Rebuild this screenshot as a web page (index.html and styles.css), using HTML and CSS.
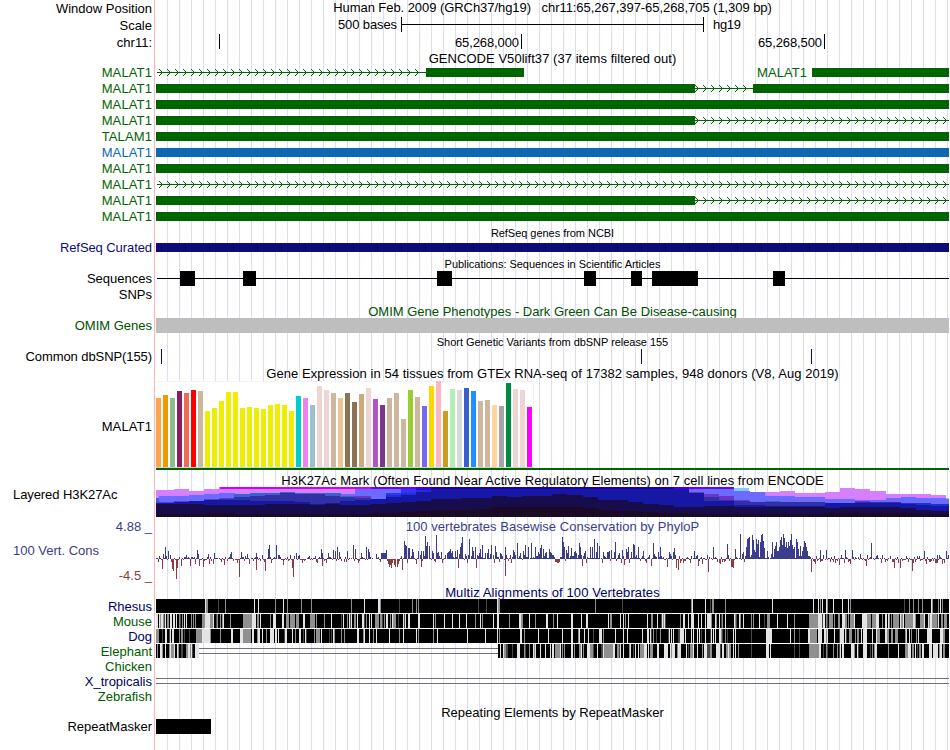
FILE: index.html
```html
<!DOCTYPE html>
<html lang="en">
<head>
    <meta charset="UTF-8">
    <title>Human chr11:65,267,397-65,268,705 - Genome Browser</title>
    <link rel="stylesheet" href="styles.css">
</head>
<body>
    <div class="browser">
        <div class="track ruler">
            <div class="label l-first">Window Position</div>
            <div class="title t-window">Human Feb. 2009 (GRCh37/hg19) &nbsp; chr11:65,267,397-65,268,705 (1,309 bp)</div>
        </div>
        <div class="track ruler lower">
            <div class="label">Scale</div>
            <svg class="data" width="794" height="17">
                <text x="241" y="12" text-anchor="end" textLength="59">500 bases</text>
                <path class="tick" d="M245.5 0v15M547.5 0v15M245 7.5h302"/>
                <text x="557" y="12" textLength="28">hg19</text>
            </svg>
        </div>
        <div class="track ruler lower">
            <div class="label">chr11:</div>
            <svg class="data" width="794" height="17">
                <path class="tick" d="M63.5 0v15M365.5 0v15M668.5 0v15"/>
                <text x="363" y="13" text-anchor="end" textLength="64">65,268,000</text>
                <text x="666" y="13" text-anchor="end" textLength="64">65,268,500</text>
            </svg>
        </div>

        <div class="track head short"><div class="title t-gencode">GENCODE V50lift37 (37 items filtered out)</div></div>
        <div id="genes"></div>

        <div class="track head lower"><div class="title small">RefSeq genes from NCBI</div></div>
        <div class="track refseq">
            <div class="label tight">RefSeq Curated</div>
            <svg class="data" width="793" height="16"><rect y="3" width="793" height="9"/></svg>
        </div>

        <div class="track head lower"><div class="title small">Publications: Sequences in Scientific Articles</div></div>
        <div class="track">
            <div class="label">Sequences</div>
            <svg class="data" width="793" height="16">
                <path d="M1 7h792v1H1zM24 0h15v15H24zM87 0h13v15H87zM281 0h15v15H281zM428 0h12v15H428zM475 0h11v15H475zM496 0h46v15H496zM617 0h12v15H617z"/>
            </svg>
        </div>
        <div class="track"><div class="label">SNPs</div></div>

        <div class="track head omim lower"><div class="title t-omim">OMIM Gene Phenotypes - Dark Green Can Be Disease-causing</div></div>
        <div class="track omim">
            <div class="label">OMIM Genes</div>
            <svg class="data" width="793" height="16"><rect width="793" height="15"/></svg>
        </div>

        <div class="track head lower"><div class="title small">Short Genetic Variants from dbSNP release 155</div></div>
        <div class="track">
            <div class="label tight">Common dbSNP(155)</div>
            <svg class="data" width="793" height="16">
                <path class="snp" d="M5.5 0v15M485.5 0v15M655.5 0v15"/>
            </svg>
        </div>

        <div class="track head tall lower"><div class="title t-gtex">Gene Expression in 54 tissues from GTEx RNA-seq of 17382 samples, 948 donors (V8, Aug 2019)</div></div>
        <div class="track gtex">
            <div class="label wide">MALAT1</div>
            <svg class="data" id="gtex" width="793" height="89"></svg>
        </div>

        <div class="track head tall2"><div class="title t-h3k">H3K27Ac Mark (Often Found Near Active Regulatory Elements) on 7 cell lines from ENCODE</div></div>
        <div class="track h3k">
            <div class="label left tight">Layered H3K27Ac</div>
            <svg class="data" id="h3k" width="793" height="30"></svg>
        </div>

        <div class="track head cons">
            <div class="label">4.88 _</div>
            <div class="title t-phylop">100 vertebrates Basewise Conservation by PhyloP</div>
        </div>
        <div class="track phylop cons">
            <div class="label limits">
                <span class="name">100 Vert. Cons</span>
                <span class="min">-4.5 _</span>
            </div>
            <svg class="data" id="phylop" width="793" height="51"></svg>
        </div>

        <div class="track head short multiz"><div class="title t-multiz">Multiz Alignments of 100 Vertebrates</div></div>
        <div id="multiz"></div>

        <div class="track head lower"><div class="title t-repeat">Repeating Elements by RepeatMasker</div></div>
        <div class="track">
            <div class="label">RepeatMasker</div>
            <svg class="data" width="793" height="16"><rect width="55" height="15"/></svg>
        </div>
    </div>
    <script src="tracks.js"></script>
</body>
</html>
```
FILE: styles.css
```css
body {
    margin: 0;
    background: #fff;
    font-family: "Liberation Sans", Arial, Helvetica, sans-serif;
    font-size: 13px;
    line-height: 15px;
    color: #000;
}
.browser {
    width: 950px;
    height: 750px;
    overflow: hidden;
    /* red edge of the label column, then one guide line every 12px */
    background:
        linear-gradient(#ffb4b4, #ffb4b4) 154px 0 / 1px 100% no-repeat,
        repeating-linear-gradient(to right, #dcdcf8 0, #dcdcf8 1px, transparent 1px, transparent 12px) 167px 0 / 783px 100% no-repeat;
}
.track {
    display: grid;
    grid-template-columns: 152px 794px;
    column-gap: 4px;
    height: 16px;
}
.ruler {
    height: 17px;
}
.head {
    height: 15px;
}
.short {
    height: 14px;
}
.tall {
    height: 16px;
}
.lower > .title, .ruler.lower > .label, .l-first {
    padding-top: 1px;
}
.label {
    text-align: right;
    white-space: nowrap;
}
.label.left {
    text-align: left;
    padding-left: 13px;
}
.tight {
    letter-spacing: -0.08px;
}
.wide {
    letter-spacing: 0.12px;
}
.title {
    grid-column: 2;
    width: 793px;
    text-align: center;
    white-space: nowrap;
}
.small {
    font-size: 11px;
    letter-spacing: -0.04px;
}
.t-window {
    letter-spacing: -0.06px;
}
.t-gencode {
    letter-spacing: 0.05px;
}
.t-gtex, .t-h3k {
    letter-spacing: 0.057px;
}
.t-phylop {
    letter-spacing: 0.03px;
}
.t-multiz {
    letter-spacing: 0.1px;
}
.data {
    display: block;
    grid-column: 2;
    overflow: hidden;
    shape-rendering: crispEdges;
}
.tick {
    stroke: #000;
    fill: none;
}
.snp {
    stroke: #0000c8;
}

/* genes */
.gene {
    color: #006400;
    fill: #006400;
}
.gene.canonical {
    color: #0c68b0;
    fill: #0c68b0;
}
.refseq {
    color: #0c0c78;
    fill: #0c0c78;
}
.omim {
    color: #005000;
    fill: #bebebe;
}

/* expression */
.gtex {
    height: 89px;
}
.gtex .label {
    padding-top: 38px;
}
.tall2 {
    height: 17px;
}
.tall2 .title {
    padding-top: 3px;
}
.h3k {
    height: 32px;
}

/* conservation */
.cons {
    color: #3c3c8c;
}
.phylop {
    height: 51px;
}
.limits {
    display: flex;
    flex-direction: column;
    justify-content: space-between;
    height: 40px;
    padding-top: 9px;
}
.limits .name {
    text-align: left;
    padding-left: 13px;
}
.limits .min {
    color: #8c3c3c;
}
.multiz {
    color: #000064;
}
.species {
    height: 15px;
    color: #000064;
}
.species.alt {
    color: #005a00;
}
```
FILE: tracks.js
```js
const LEFT = 156;

function rect(x, y, w, h, fill) {
    return `<rect x="${x}" y="${y}" width="${w}" height="${h}"${fill ? ` fill="${fill}"` : ''}/>`;
}

// small repeatable generator for the fine grained signal
function rng(seed) {
    return () => {
        seed = (seed * 1664525 + 1013904223) >>> 0;
        return seed / 4294967296;
    };
}

// ---- genes: exons and introns as [start, end] ----
const genes = [
    { exons: [[426, 524], [812, 949]], introns: [[157, 426]], inner: 'MALAT1' },
    { exons: [[156, 695], [753, 949]], introns: [[695, 753]] },
    { exons: [[156, 949]] },
    { exons: [[156, 695]], introns: [[695, 949]] },
    { name: 'TALAM1', exons: [[156, 949]] },
    { exons: [[156, 949]], canonical: true },
    { exons: [[156, 949]] },
    { exons: [], introns: [[157, 949]] },
    { exons: [[156, 695]], introns: [[695, 949]] },
    { exons: [[156, 949]] }
];

document.getElementById('genes').innerHTML = genes.map(g => {
    let s = '';
    (g.introns || []).forEach(([a, b]) => {
        let d = `M${a - LEFT} 7h${b - a}v1h${a - b}z`;
        for (let tip = 162; tip < b; tip += 8) {
            if (tip - 3 < a) continue;
            for (let k = 1; k <= 3; k++) {
                const x = tip - LEFT - k;
                d += `M${x} ${7 - k}h1v1h-1zM${x} ${7 + k}h1v1h-1z`;
            }
        }
        s += `<path d="${d}"/>`;
    });
    g.exons.forEach(([a, b]) => { s += rect(a - LEFT, 3, b - a, 9); });
    if (g.inner) s += `<text x="651" y="12" text-anchor="end" textLength="50">${g.inner}</text>`;
    return `<div class="track gene${g.canonical ? ' canonical' : ''}"><div class="label wide">${g.name || 'MALAT1'}</div><svg class="data" width="793" height="16">${s}</svg></div>`;
}).join('');

// ---- GTEx ----
const tissues = [
    [69, '#ffa54f'], [72, '#ee9a00'], [69, '#8fbc8f'], [76, '#8b1c62'], [74, '#ee6a50'], [77, '#ff0000'], [76, '#cdb79e'],
    [56, '#eeee00'], [59, '#eeee00'], [66, '#eeee00'], [75, '#eeee00'], [75, '#eeee00'], [59, '#eeee00'], [60, '#eeee00'],
    [59, '#eeee00'], [58, '#eeee00'], [62, '#eeee00'], [63, '#eeee00'], [62, '#eeee00'], [56, '#eeee00'],
    [71, '#00cdcd'], [69, '#ee82ee'], [62, '#9ac0cd'], [81, '#eed5d2'], [77, '#eed5d2'], [74, '#cdb79e'], [69, '#eec591'],
    [74, '#8b7355'], [65, '#8b7355'], [73, '#cdaa7d'], [79, '#eed5d2'], [68, '#b452cd'], [62, '#7a378b'], [69, '#cdb79e'],
    [74, '#cdb79e'], [48, '#cdb79e'], [77, '#9acd32'], [70, '#cdb79e'], [61, '#7a67ee'], [81, '#ffd700'], [86, '#ffb6c1'],
    [56, '#cd9b1d'], [78, '#b4eeb4'], [77, '#d9d9d9'], [79, '#3a5fcd'], [76, '#1e90ff'], [66, '#cdb79e'], [67, '#cdb79e'],
    [62, '#ffd39b'], [61, '#a6a6a6'], [84, '#008b45'], [78, '#eed5d2'], [77, '#eed5d2'], [60, '#ff00ff']
];
document.getElementById('gtex').innerHTML =
    rect(0, 0, 378, 87, '#f3f3f3') + rect(0, 1, 377, 85, '#fff') + rect(0, 86, 378, 1, '#d0d0d0') +
    tissues.map(([h, c], i) => rect(i * 7, 86 - h, 5, h, c)).join('') +
    rect(0, 87, 793, 2, '#006400');

// ---- H3K27Ac: every layer is a list of [x, top], held until the next x; null = nothing ----
const layers = [
    ['#d67fff', [[156, 490], [174, 489], [189, 491], [204, 489], [219, 487], [355, null], [765, 492], [780, 491], [795, 493], [825, 492], [840, 488], [855, 489], [870, 491], [886, 494], [931, 495], [946, null]]],
    ['#80ccff', [[734, 488], [749, null], [946, 498]]],
    ['#6b6bff', [[159, 496], [189, 495], [204, 494], [219, 493], [235, null], [341, 494], [355, 489], [401, null], [689, 489], [734, 491], [750, 492], [765, 496], [795, 497], [825, 499], [855, 500], [886, 498], [901, 497], [916, 498], [946, 499]]],
    ['#3333ff', [[386, 493], [401, 489], [416, 488], [431, null]]],
    ['#d400ff', [[220, 487], [371, null]], 489],
    ['#6a00ff', [[371, 487], [416, null], [689, 487], [734, null]], 489],
    ['#3366cc', [[156, 498], [159, null], [234, 494], [250, 493], [280, 492], [295, 493], [341, 496], [355, null], [765, 501], [780, null]]],
    ['#6a35c8', [[156, 502], [174, 501], [204, 499], [219, 498], [234, null], [355, 496], [371, null], [689, 492], [704, 494], [719, 496], [734, 500], [749, null], [855, 501], [870, null]]],
    ['#3230a5', [[219, 499], [234, 497], [250, 496], [265, 495], [280, 493], [295, 494], [325, 496], [340, 497], [355, 498], [371, null], [704, 497], [719, 500], [734, 501], [750, 502], [825, 503], [855, 502], [901, null]]],
    ['#1a33cc', [[386, 495], [401, 493], [416, 490], [431, null], [901, 503], [931, 504]]],
    ['#1717a5', [[156, 503], [174, 502], [189, 501], [204, 500], [250, 501], [295, 502], [310, 504], [325, 503], [340, 501], [355, 500], [371, 499], [386, 497], [401, 495], [416, 492], [431, 487], [674, 490], [689, 493], [704, 501], [734, 505], [765, 506], [825, 503], [886, 503], [901, 504], [916, 505], [931, 506]]],
    ['#1b00a8', [[431, 487], [674, null]], 489],
    ['#3a00e0', [[416, 487], [431, null], [674, 487], [689, null]], 490],
    ['#170d4d', [[156, 504], [204, 505], [265, 504], [310, 505], [325, 504], [340, 505], [371, 504], [386, 503], [401, 502], [416, 501], [431, 499], [461, 498], [492, 496], [507, 497], [522, 496], [552, 494], [567, 495], [583, 497], [598, 500], [628, 502], [643, 504], [659, 505], [674, 507], [704, 506], [734, 507], [825, 508], [840, 507], [900, 508], [916, 510], [931, 511]]],
    ['#1a0a26', [[156, 514], [204, 513], [235, 514], [371, 513], [401, 512], [416, 511], [431, 510], [477, 509], [492, 507], [583, 508], [598, 510], [614, 511], [643, 512], [659, 513], [689, 514], [825, 513], [916, 514]]]
];
document.getElementById('h3k').innerHTML = layers.map(([color, steps, bottom = 517]) =>
    steps.map(([x, top], i) => {
        const end = i + 1 < steps.length ? steps[i + 1][0] : 949;
        return top === null ? '' : rect(x - LEFT, top - 487, end - x, bottom - top, color);
    }).join('')).join('');

// ---- PhyloP: peaks as x:height ----
const up = '163:5 165:12 168:8 197:9 198:5 208:5 214:6 230:5 231:7 241:7 247:5 256:6 262:4 268:10 269:14 276:14 278:4 296:6 309:3 321:10 322:6 328:6 333:9 335:8 337:12 339:7 347:8 353:14 355:10 361:6 366:12 368:10 369:7 376:5 381:6 382:6 383:6 384:6 385:6 386:9 ' +
    '404:18 405:14 406:13 408:11 409:11 412:10 421:8 425:23 426:13 427:17 429:13 436:24 450:10 452:8 455:8 457:9 460:12 461:16 462:22 469:20 472:12 475:12 480:10 482:14 488:10 491:14 495:13 505:12 513:9 517:16 523:8 525:14 528:12 531:16 535:12 540:11 541:14 543:10 549:10 ' +
    '562:22 563:17 564:12 566:9 568:13 571:11 579:16 580:12 585:8 590:12 592:12 594:20 597:16 599:13 611:9 615:17 622:9 626:10 628:12 633:15 634:14 638:12 643:8 653:16 660:12 669:7 674:11 694:8 713:12 727:15 735:10 740:25 742:5 746:12 747:20 748:21 749:22 752:24 753:19 754:9 756:20 757:15 758:19 760:17 761:24 762:25 763:18 764:11 772:17 774:10 775:13 776:17 777:8 779:12 780:19 781:22 782:14 783:25 784:21 785:12 786:17 787:11 788:17 789:13 790:19 791:25 792:14 793:10 794:12 796:20 797:17 798:10 800:13 802:8 803:12 804:18 805:16 806:12 807:8 820:9 826:9 845:9 852:9 860:5 871:16 890:3 924:8 937:4 946:8';
const down = '162:10 172:10 173:12 176:20 177:9 181:7 190:7 195:5 199:7 203:8 209:5 213:5 224:6 239:18 249:5 256:11 265:12 283:6 292:9 293:18 322:7 358:4 388:5 389:8 390:6 391:9 392:4 394:6 395:8 397:8 398:5 402:11 416:5 421:8 458:9 467:4 476:9 505:17 511:4 555:3 556:3 557:4 558:4 559:3 582:7 586:4 602:4 624:6 651:7 667:8 676:9 678:11 683:4 698:7 702:5 708:13 717:3 719:4 720:5 722:3 731:8 732:8 733:9 811:13 815:5 820:3 830:3 839:6 850:5 866:7 894:9 900:9 912:12 926:5 937:4 942:5';
const peaks = str => new Map(str.split(' ').map(p => p.split(':').map(Number)));
const upPeaks = peaks(up), downPeaks = peaks(down);
const rand = rng(11);
let bars = '';
for (let x = LEFT; x < 949; x++) {
    const busy = (x > 400 && x < 675) || (x > 735 && x < 808);
    const r = rand(), n = rand();
    let u = upPeaks.get(x) || 0, d = downPeaks.get(x) || 0;
    if (!u && !d) {
        if (r < (busy ? 0.82 : 0.5)) u = 1 + Math.floor(n * n * (busy ? 8 : 4));
        else if (r > (busy ? 0.9 : 0.6)) d = 1 + Math.floor(n * n * 4);
    }
    if (u) bars += rect(x - LEFT, 25 - u, 1, u, '#3c3c8c');
    if (d) bars += rect(x - LEFT, 25, 1, d, '#8c3c3c');
}
document.getElementById('phylop').innerHTML = bars;

// ---- multiz: wide blocks x:width:shade, plus [from, to, density] of thin stripes ----
const shades = { w: '#e4e4e4', g: '#909090', d: '#484848', k: '#000' };
const species = [
    { name: 'Rhesus', from: 156,
      blocks: '205:1:w 206:2:g 218:1:d 225:1:g 254:1:w 258:1:w 275:1:g 283:1:w 287:1:g 301:1:g 311:1:g 351:1:g 364:1:w 378:2:w 380:1:g 399:1:d 412:1:g 416:1:g 418:1:g 478:1:d 486:1:d 497:1:w 498:2:g 595:1:g 622:1:d 691:1:g 692:1:w 705:1:w 710:1:d 712:2:g 725:1:g 772:1:w 813:1:w 818:1:w 820:1:g 822:1:w 826:1:w 827:1:g 833:1:w 842:1:w 848:1:w 850:1:g 904:1:d 909:1:g 913:1:g 918:1:g 922:1:g 931:1:w 932:1:g 938:1:g 940:1:w 942:1:g', zones: [] },
    { name: 'Mouse', alt: true, from: 156,
      blocks: '161:2:w 202:3:g 205:5:w 210:3:g 243:9:g 252:4:w 257:2:g 273:3:w 282:2:w 286:3:g 290:5:g 296:3:g 303:2:w 310:4:g 349:1:w 354:2:g 362:2:w 375:4:g 386:2:w 393:3:g 408:1:w 419:1:w 433:1:w 435:1:g 444:1:w 452:1:w 459:1:w 466:1:w 475:1:g 480:1:w 482:1:g 493:1:w 497:2:w 509:1:g 519:2:w 521:2:g 529:1:w 535:1:g 546:2:w 553:1:g 557:1:w 571:2:w 581:1:w 586:2:w 608:1:w 610:2:g 625:1:g 628:1:w 647:1:w 652:1:g 657:1:w 663:1:g 680:1:g 683:1:w 691:3:w 698:1:w 705:1:w 708:3:w 719:1:w 722:1:g 725:1:w 743:1:w 764:1:d 767:3:g 777:1:w 787:1:w 794:1:g 809:9:g 818:4:w 823:2:w 829:4:g 842:3:w 845:2:g 850:3:g 862:5:w 867:4:g 872:4:g 876:3:w 885:2:w 895:4:g 901:2:g 905:8:g 913:2:w 920:4:g 924:1:w 930:2:w 932:5:g 938:1:w 941:2:g 944:3:g',
      zones: [[156, 200, .55], [212, 242, .6], [258, 300, .3], [300, 345, .28], [346, 420, .42], [612, 626, .2], [648, 670, .3], [680, 730, .4], [730, 765, .15], [818, 862, .35], [880, 949, .4]] },
    { name: 'Dog', from: 156,
      blocks: '157:2:g 165:2:w 172:2:w 196:6:g 203:5:w 209:1:w 220:1:g 231:2:w 240:3:w 243:8:g 252:2:w 258:2:w 270:3:w 275:2:w 285:2:w 292:1:w 299:2:w 316:4:g 321:1:w 334:1:g 344:1:g 357:2:w 363:1:g 373:1:g 376:1:w 389:1:w 399:1:g 403:1:w 416:1:w 418:1:g 433:1:g 437:1:w 467:1:w 485:1:w 497:1:w 499:1:g 520:2:w 524:1:g 538:1:w 548:1:w 562:1:w 571:2:w 579:1:w 584:1:w 588:1:w 600:2:w 615:1:w 627:1:w 642:1:w 647:2:w 653:1:g 669:1:w 673:1:w 680:2:w 683:1:w 691:1:w 699:1:w 705:1:w 719:2:w 725:1:g 735:1:w 751:1:d 766:6:w 790:1:w 794:1:g 799:1:d 808:2:w 810:7:g 818:3:w 824:1:w 841:3:w 849:3:g 857:2:g 863:4:w 872:1:w 878:2:g 886:1:w 895:3:g 906:1:w 909:1:w 918:1:w 927:5:w 940:3:w 943:2:g',
      zones: [[156, 190, .35], [200, 215, .4], [254, 300, .3], [300, 345, .3], [346, 380, .2], [566, 625, .22], [648, 680, .35], [680, 735, .35], [820, 862, .3], [865, 925, .3]] },
    { name: 'Elephant', alt: true, from: 156, gap: [199, 498],
      blocks: '157:1:g 160:2:w 162:1:g 171:2:g 174:1:w 178:1:g 188:2:w 191:1:w 195:1:w 196:3:w 500:1:w 504:1:g 519:1:w 535:1:w 540:1:w 552:1:w 556:3:g 560:1:w 571:2:w 581:1:w 588:2:w 590:3:g 597:1:w 604:9:g 613:2:w 617:2:g 630:1:w 640:4:g 644:3:w 650:3:g 657:2:w 664:4:w 672:3:w 678:2:w 690:3:g 704:3:w 716:4:w 722:2:w 729:2:g 735:1:w 751:1:d 766:3:w 770:1:w 794:1:d 799:1:d 809:5:g 814:5:g 819:2:w 842:2:w 863:4:w 875:2:w 888:1:g 898:1:w 905:4:g 908:3:w 919:2:g 929:3:w 933:5:w 940:1:w 943:2:g',
      zones: [[163, 196, .5], [498, 536, .4], [545, 565, .4], [570, 625, .35], [625, 740, .42], [818, 862, .28], [868, 880, .4], [895, 945, .35]] },
    { name: 'Chicken', alt: true },
    { name: 'X_tropicalis', gap: [156, 949] },
    { name: 'Zebrafish', alt: true }
];

document.getElementById('multiz').innerHTML = species.map((sp, n) => {
    let s = '';
    if (sp.from) s += rect(0, 0, 793, 14, '#000');
    (sp.zones || []).forEach(([a, b, density]) => {
        const next = rng(n * 97 + a);
        next();
        for (let x = a; x < b; x++) {
            const hit = next() < density * .8, tone = next();
            if (hit) s += rect(x - LEFT, 0, 1, 14, tone < .4 ? shades.w : tone < .75 ? shades.g : shades.d);
        }
    });
    if (sp.blocks) sp.blocks.split(' ').forEach(b => {
        const [x, w, c] = b.split(':');
        s += rect(x - LEFT, 0, w, 14, shades[c]);
    });
    let body = s;
    if (sp.gap) {
        const [a, b] = sp.gap;
        const lines = rect(a - LEFT, 4, b - a, 1, '#707070') + rect(a - LEFT, 9, b - a, 1, '#707070');
        // aligned bases only on both sides of the gap
        body = sp.from
            ? `<clipPath id="sides"><rect width="${a - LEFT}" height="14"/><rect x="${b - LEFT}" width="${949 - b}" height="14"/></clipPath><g clip-path="url(#sides)">${s}</g>${lines}`
            : lines;
    }
    return `<div class="track species${sp.alt ? ' alt' : ''}"><div class="label">${sp.name}</div><svg class="data" width="793" height="15">${body}</svg></div>`;
}).join('');
```
